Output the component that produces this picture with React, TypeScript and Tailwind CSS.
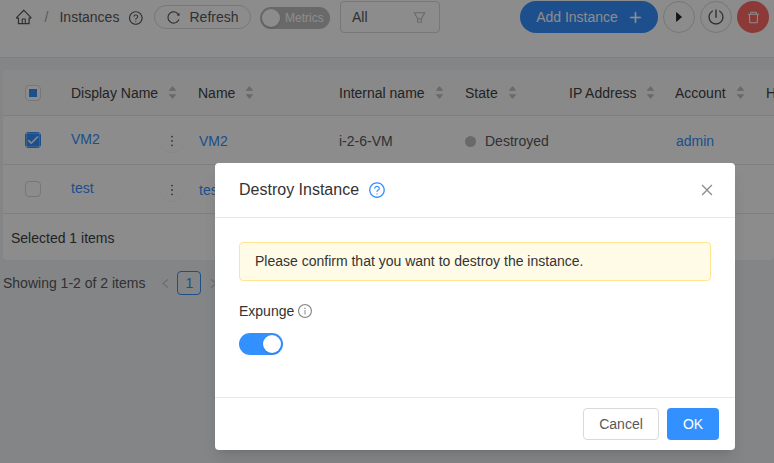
import {
  AiFillCaretDown,
  AiFillCaretRight,
  AiFillCaretUp,
  AiOutlineClose,
  AiOutlineDelete,
  AiOutlineFilter,
  AiOutlineHome,
  AiOutlineInfoCircle,
  AiOutlineLeft,
  AiOutlineMore,
  AiOutlinePlus,
  AiOutlinePoweroff,
  AiOutlineQuestionCircle,
  AiOutlineReload,
  AiOutlineRight,
} from "react-icons/ai";
import { MdCheck } from "react-icons/md";

const ROW = "grid grid-cols-[68px_128px_140px_126px_104px_107px_90px_40px] items-center";

function Sorter() {
  return (
    <span className="ml-[9px] inline-flex flex-col text-[#bfbfbf]">
      <AiFillCaretUp className="-mb-[3px] text-[11px]" />
      <AiFillCaretDown className="text-[11px]" />
    </span>
  );
}

function Head({ label }: { label: string }) {
  return (
    <div className="flex items-center whitespace-nowrap text-[#404040]">
      {label}
      <Sorter />
    </div>
  );
}

function Kebab() {
  return (
    <span className="ml-auto mr-[15px] flex h-6 w-6 items-center justify-center rounded-full border-b border-[#f5f5f5] text-[#595959]">
      <AiOutlineMore className="text-[16px]" />
    </span>
  );
}

function Row({ name, checked, state, account, internal }: { name: string; checked?: boolean; state?: string; account?: string; internal?: string }) {
  return (
    <div className={`${ROW} h-[49px] border-b border-[#e8e8e8] pt-[2px]`}>
      <div className="-mt-[2px] pl-[22px]">
        {checked ? (
          <span className="flex h-4 w-4 items-center justify-center rounded-sm bg-[#3390ff] text-white">
            <MdCheck className="stroke-current stroke-1 text-[14px]" />
          </span>
        ) : (
          <span className="block h-4 w-4 rounded-sm border border-[#d9d9d9] bg-white" />
        )}
      </div>
      <div className="flex items-center">
        <span className="-mt-[4px] text-[#3390ff]">{name}</span>
        <Kebab />
      </div>
      <div className="text-[#3390ff]">{name}</div>
      <div className="text-[#595959]">{internal}</div>
      <div className="flex items-center text-[#595959]">
        {state && <span className="mr-[9px] h-[11px] w-[11px] rounded-full bg-[#bfbfbf]" />}
        {state}
      </div>
      <div />
      <div className="text-[#3390ff]">{account}</div>
      <div />
    </div>
  );
}

export default function App() {
  return (
    <div className="relative h-[463px] w-[774px] overflow-hidden bg-[#f0f2f5] font-['Liberation_Sans',Arial,sans-serif] text-sm text-[#595959]">
      {/* top bar */}
      <header className="flex h-[58px] items-start border-b border-[#e8e8e8] bg-white pl-[15px]">
        <div className="mt-[7px] flex w-[129px] items-center">
          <AiOutlineHome className="text-[18px] text-[#595959]" />
          <span className="ml-[12px] text-[#a6a6a6]">/</span>
          <span className="ml-[11px]">Instances</span>
          <AiOutlineQuestionCircle className="ml-[9px] mt-[2px] text-[16px] text-[#595959]" />
        </div>
        <button className="ml-[10px] mt-[5px] flex h-6 w-[97px] items-center justify-center rounded-full border border-[#d9d9d9] text-[#595959]">
          <AiOutlineReload className="mr-2 text-[15px]" />
          Refresh
        </button>
        <div className="ml-[9px] mt-[7px] flex h-[22px] w-[70px] items-center rounded-full bg-[#bfbfbf] pl-[2px]">
          <span className="h-[18px] w-[18px] rounded-full bg-white shadow" />
          <span className="ml-[5px] text-xs text-white">Metrics</span>
        </div>
        <div className="ml-[10px] mt-px flex h-8 w-[100px] items-center justify-between rounded border border-[#d9d9d9] pl-[11px] pr-3">
          All
          <AiOutlineFilter className="text-[15px] text-[#bfbfbf]" />
        </div>
        <button className="ml-20 mt-px flex h-8 w-[138px] items-center justify-center rounded-full bg-[#3390ff] pl-px text-white">
          Add Instance
          <AiOutlinePlus className="ml-[10px] stroke-[40] text-[15px]" />
        </button>
        <button className="ml-[5px] mt-px flex h-8 w-8 items-center justify-center rounded-full border border-[#d9d9d9] text-[#262626]">
          <AiFillCaretRight className="text-[14px]" />
        </button>
        <button className="ml-[5px] mt-px flex h-8 w-8 items-center justify-center rounded-full border border-[#d9d9d9]">
          <AiOutlinePoweroff className="text-[18px]" />
        </button>
        <button className="ml-[5px] mt-px flex h-8 w-8 items-center justify-center rounded-full bg-[#ff6a64] text-white">
          <AiOutlineDelete className="text-[15px]" />
        </button>
      </header>

      {/* table card */}
      <section className="ml-[3px] mt-3 rounded bg-white">
        <div className={`${ROW} h-[46px] border-b border-[#e8e8e8] bg-[#fafafa] font-normal`}>
          <div className="pl-[22px]">
            <span className="flex h-4 w-4 items-center justify-center rounded-sm border border-[#d9d9d9] bg-white">
              <span className="h-2 w-2 bg-[#3390ff]" />
            </span>
          </div>
          <Head label="Display Name" />
          <div className="-ml-px">
            <Head label="Name" />
          </div>
          <Head label="Internal name" />
          <Head label="State" />
          <Head label="IP Address" />
          <div className="-ml-px">
            <Head label="Account" />
          </div>
          <div className="text-[#404040]">H</div>
        </div>
        <Row name="VM2" checked state="Destroyed" account="admin" internal="i-2-6-VM" />
        <Row name="test" />
        <div className="flex h-[46px] items-center pl-2 pt-[2px] text-[#404040]">Selected 1 items</div>
      </section>

      {/* pagination */}
      <div className="mt-[11px] flex items-center">
        <span className="ml-[3px]">Showing 1-2 of 2 items</span>
        <AiOutlineLeft className="ml-[14px] text-[13px] text-[#bfbfbf]" />
        <span className="ml-[5px] flex h-6 w-6 items-center justify-center rounded border border-[#3390ff] text-[#3390ff]">1</span>
        <AiOutlineRight className="ml-[6px] text-[13px] text-[#bfbfbf]" />
      </div>

      {/* mask */}
      <div className="absolute inset-0 bg-black/45" />

      {/* destroy dialog */}
      <div className="absolute left-[215px] top-[163px] w-[520px] rounded bg-white shadow-lg">
        <div className="flex h-[55px] items-center border-b border-[#e8e8e8] px-6">
          <span className="text-base text-[#333333]">Destroy Instance</span>
          <AiOutlineQuestionCircle className="ml-[9px] text-[18px] text-[#3390ff]" />
          <AiOutlineClose className="ml-auto mr-[-4px] text-[16px] text-[#8c8c8c]" />
        </div>
        <div className="h-[179px] px-6 pt-6">
          <div className="flex h-[39px] items-center rounded border border-[#ffe58f] bg-[#fffbe6] pb-[2px] pl-[15px] text-[#333333]">
            Please confirm that you want to destroy the instance.
          </div>
          <div className="mt-[20px] flex items-center text-[#333333]">
            Expunge
            <AiOutlineInfoCircle className="ml-[3px] text-[16px] text-[#8c8c8c]" />
          </div>
          <div className="mt-3 flex h-[22px] w-11 items-center justify-end rounded-full bg-[#3390ff] pr-[2px]">
            <span className="h-[18px] w-[18px] rounded-full bg-white shadow" />
          </div>
        </div>
        <div className="flex h-[53px] items-center justify-end gap-2 border-t border-[#e8e8e8] px-4">
          <button className="h-8 w-[76px] rounded border border-[#d9d9d9] bg-white text-[#595959]">Cancel</button>
          <button className="h-8 w-[52px] rounded bg-[#3390ff] text-white">OK</button>
        </div>
      </div>
    </div>
  );
}
